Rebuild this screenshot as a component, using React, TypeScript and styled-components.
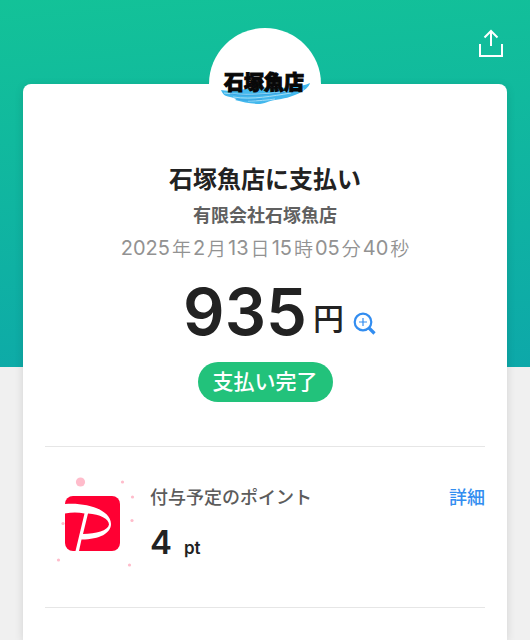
import React from "react";
import styled, { createGlobalStyle } from "styled-components";

const GlobalStyle = createGlobalStyle`
  * { box-sizing: border-box; }
  body {
    margin: 0;
    background: #f0f0f0;
    font-family: Inter, "Noto Sans CJK JP", sans-serif;
    color: #222;
  }
`;

const Page = styled.main`
  display: flex;
  flex-direction: column;
  min-height: 100vh;
  padding: 0 23px;
  background: linear-gradient(175deg, #13c298 0%, #0da8a9 100%) 0 0 / 100% 367px no-repeat #f0f0f0;
`;

const TopBar = styled.header`
  display: flex;
  justify-content: flex-end;
  height: 84px;
  padding: 28px 3px 0 0;
`;

const IconButton = styled.button`
  display: flex;
  padding: 0;
  border: 0;
  background: none;
  cursor: pointer;
`;

const ShareButton = styled(IconButton)`
  align-self: flex-start;
`;

const Card = styled.section`
  flex: 1;
  padding: 0 22px;
  border-radius: 8px 8px 0 0;
  background: #fff;
  box-shadow: 0 2px 10px rgba(0, 0, 0, 0.12);
`;

const Summary = styled.div`
  display: flex;
  flex-direction: column;
  align-items: center;
  padding-bottom: 44px;
`;

const Avatar = styled.div`
  display: flex;
  width: 112px;
  height: 112px;
  margin-top: -56px;
  border-radius: 50%;
  background: #fff;
`;

const Title = styled.h1`
  margin: 22px 0 0;
  font-size: 24px;
  line-height: 36px;
  font-weight: 600;
`;

const Company = styled.p`
  margin: 4px 0 0;
  color: #606060;
  font-size: 18px;
  line-height: 28px;
  font-weight: 600;
`;

const PaidAt = styled.time`
  display: flex;
  gap: 2px;
  margin-top: 4px;
  color: #929292;
  font-size: 20px;
  line-height: 28px;
  font-weight: 400;
`;

const CjkUnit = styled.span`
  font-family: "Noto Sans CJK JP", sans-serif;
  font-size: 19px;
  font-weight: 350;
`;

const Amount = styled.div`
  display: flex;
  align-items: flex-end;
  margin: 10px 0 0 30px;
`;

const AmountValue = styled.span`
  font-size: 65px;
  line-height: 80px;
  font-weight: 600;
`;

const Yen = styled.span`
  margin: 0 9px 13px 6px;
  font-size: 31px;
  line-height: 40px;
  font-weight: 500;
`;

const ZoomButton = styled(IconButton)`
  margin-bottom: 16px;
`;

const Status = styled.span`
  margin-top: 10px;
  padding: 0 15px;
  border-radius: 20px;
  background: #22c27b;
  color: #fff;
  font-size: 21px;
  line-height: 40px;
  font-weight: 500;
`;

const Points = styled.div`
  display: flex;
  align-items: flex-start;
  padding: 29px 0 37px 10px;
  border: solid #e6e6e6;
  border-width: 1px 0;
`;

const PointsText = styled.div`
  flex: 1;
  padding: 8px 0 0 15px;
`;

const Label = styled.h2`
  margin: 0;
  color: #5c5c5c;
  font-size: 18px;
  line-height: 28px;
  font-weight: 500;
`;

const PointsValue = styled.p`
  display: flex;
  align-items: baseline;
  gap: 12px;
  margin: 10px 0 0;
  font-size: 33px;
  line-height: 40px;
  font-weight: 600;
`;

const Unit = styled.span`
  font-size: 17px;
`;

const DetailLink = styled.a`
  padding-top: 8px;
  color: #328df0;
  font-size: 18px;
  line-height: 28px;
  font-weight: 500;
  text-decoration: none;
`;

const LogoText = styled.text`
  font-family: "Noto Sans CJK JP", sans-serif;
  font-size: 20px;
  font-weight: 900;
  stroke: #080808;
  stroke-width: 1;
`;

function ShareIcon() {
  return (
    <svg width="26" height="30" viewBox="0 0 26 30" fill="none" stroke="#fff" strokeWidth="2" aria-hidden="true">
      <path d="M2 16v12h22V16M13 18V3M6.5 9.5 13 3l6.500 6.500" />
    </svg>
  );
}

function ShopLogo() {
  return (
    <svg width="112" height="112" viewBox="1 1 112 112" role="img" aria-label="石塚魚店">
      <path d="M13 63c10 2 20-1 35-2 20-1 38 2 54-5-2 8-18 15-35 17-8 1-7 3-15 4-9 0-17-2-25-4 3-1-1-2-5-3-6-1-7-3-9-7Z" fill="#43b8ed" />
      <path d="M16 66c22 3 53 1 80-4M25 70c20 3 39-1 58-4M40 74c10 0 20-1 27-2" fill="none" stroke="#a5def7" strokeWidth="1" />
      <path d="M22 67c20 3 48 0 68-4M29 72c9 2 17 1 25 0" fill="none" stroke="#3aa4e2" strokeWidth="1" />
      <LogoText x="16" y="63" fill="#080808">石塚魚店</LogoText>
    </svg>
  );
}

function ZoomIcon() {
  return (
    <svg width="24" height="24" viewBox="0 0 24 24" fill="none" stroke="#328df0" aria-hidden="true">
      <circle cx="10" cy="10" r="8.300" strokeWidth="2.200" />
      <path d="M10 6v8M6 10h8" strokeWidth="1.200" />
      <path d="m16 16 5.500 5.500" strokeWidth="3.200" />
    </svg>
  );
}

function PointsIcon() {
  return (
    <svg width="80" height="94" viewBox="0 0 80 94" aria-hidden="true">
      <g fill="#ffbccb">
        <circle cx="25.500" cy="6" r="4.600" />
        <circle cx="67.500" cy="6" r="1.600" />
        <circle cx="77.500" cy="21" r="1.600" />
        <circle cx="77" cy="44.500" r="1.600" />
        <circle cx="8" cy="47.500" r="1.600" />
        <circle cx="3.500" cy="84" r="1.600" />
        <circle cx="74.500" cy="89" r="1.600" />
      </g>
      <rect x="10" y="20" width="55" height="55" rx="8" fill="#ff0033" />
      <path
        d="M10 28C29 26 56 33 56 48C56 57 45 63.500 26.500 63.500L24 75H20.500L29.500 37.500C23 36 17 36 10 37.500ZM33 37.500L28 58C41 58 53 54.500 54 48.500C54 43 45 38 33 37.500Z"
        fill="#fff"
        fillRule="evenodd"
      />
    </svg>
  );
}

export default function App() {
  return (
    <>
      <GlobalStyle />
      <Page>
        <TopBar>
          <ShareButton type="button" aria-label="共有">
            <ShareIcon />
          </ShareButton>
        </TopBar>
        <Card>
          <Summary>
            <Avatar>
              <ShopLogo />
            </Avatar>
            <Title>石塚魚店に支払い</Title>
            <Company>有限会社石塚魚店</Company>
            <PaidAt dateTime="2025-02-13T15:05:40">
              <span>2025</span>
              <CjkUnit>年</CjkUnit>
              <span>2</span>
              <CjkUnit>月</CjkUnit>
              <span>13</span>
              <CjkUnit>日</CjkUnit>
              <span>15</span>
              <CjkUnit>時</CjkUnit>
              <span>05</span>
              <CjkUnit>分</CjkUnit>
              <span>40</span>
              <CjkUnit>秒</CjkUnit>
            </PaidAt>
            <Amount>
              <AmountValue>935</AmountValue>
              <Yen>円</Yen>
              <ZoomButton type="button" aria-label="拡大">
                <ZoomIcon />
              </ZoomButton>
            </Amount>
            <Status>支払い完了</Status>
          </Summary>
          <Points>
            <PointsIcon />
            <PointsText>
              <Label>付与予定のポイント</Label>
              <PointsValue>
                4 <Unit>pt</Unit>
              </PointsValue>
            </PointsText>
            <DetailLink href="#details">詳細</DetailLink>
          </Points>
        </Card>
      </Page>
    </>
  );
}
